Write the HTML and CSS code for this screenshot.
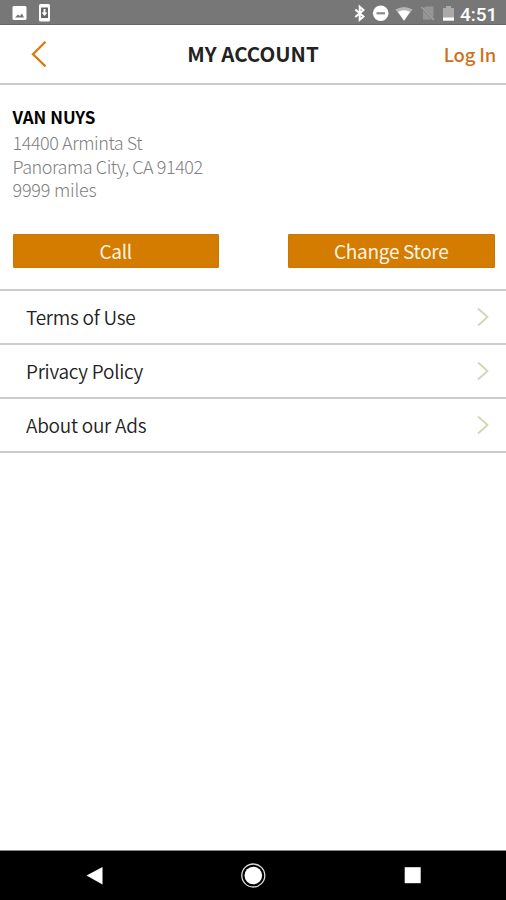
FILE: index.html
```html
<!DOCTYPE html>
<html lang="en">
<head>
  <meta charset="UTF-8" />
  <meta name="viewport" content="width=device-width, initial-scale=1.0" />
  <title>My Account</title>
  <link rel="stylesheet" href="styles.css">
</head>
<body>
  <div class="status-bar">
    <svg class="status-icons" width="60" height="25" viewBox="0 0 60 25">
      <rect x="12.5" y="6" width="14" height="14" rx="1.5" fill="#fff" />
      <path d="M15 17.5l3-3 2 1.500 2-2.500 2 4z" fill="#777" />
      <rect x="39" y="4" width="11" height="17.500" rx="1.500" fill="#fff" />
      <rect x="41" y="7.500" width="7" height="10.500" fill="#666" />
      <path d="M43.500 9h2v3.500h2l-3 3.500-3-3.500h2z" fill="#fff" />
    </svg>
    <svg class="status-icons" width="120" height="25" viewBox="340 0 120 25">
      <path d="M355.300 9.500l8.200 7-3.800 3.300V6.700l3.800 3.300-8.200 7" fill="none" stroke="#fff" stroke-width="2" />
      <circle cx="380.700" cy="13.300" r="7.800" fill="#fff" />
      <rect x="376.500" y="12.200" width="8.500" height="2.200" fill="#8a8a8a" />
      <path d="M395.500 9.500q8.500-5 17 0L404 20.700z" fill="#b5b5b5" />
      <path d="M398 11.700q6-3 12 0L404 20.700z" fill="#fff" />
      <path d="M433.500 6.500v11.500l-10-10 2.500-1.500z M423 10.500l9 9h-9z" fill="#959595" />
      <path d="M421.500 7l12.500 13" stroke="#a5a5a5" stroke-width="1.300" />
      <path d="M443 8h3V6h5v2h3v10h-11z" fill="#aaa" />
      <rect x="443" y="17.500" width="11" height="3.200" fill="#fff" />
    </svg>
    <span class="clock">4:51</span>
  </div>

  <header class="header">
    <svg class="back" width="18" height="28" viewBox="0 0 18 28">
      <path d="M15.500 1.700L3 14.300l12.500 12" fill="none" stroke="#dc7a12" stroke-width="2.300" />
    </svg>
    <h1 class="title">MY ACCOUNT</h1>
    <a class="login">Log In</a>
  </header>

  <section class="store">
    <div class="store-name">VAN NUYS</div>
    <div class="address">14400 Arminta St</div>
    <div class="address">Panorama City, CA 91402</div>
    <div class="address miles">9999 miles</div>
    <div class="buttons">
      <button class="btn">Call</button>
      <button class="btn">Change Store</button>
    </div>
  </section>

  <nav class="menu">
    <a class="row">
      <span>Terms of Use</span>
      <svg width="12" height="20" viewBox="0 0 12 20"><path d="M1 1.500L10.500 10 1 18.500" /></svg>
    </a>
    <a class="row">
      <span>Privacy Policy</span>
      <svg width="12" height="20" viewBox="0 0 12 20"><path d="M1 1.500L10.500 10 1 18.500" /></svg>
    </a>
    <a class="row">
      <span>About our Ads</span>
      <svg width="12" height="20" viewBox="0 0 12 20"><path d="M1 1.500L10.500 10 1 18.500" /></svg>
    </a>
  </nav>

  <div class="nav-bar">
    <svg width="506" height="49" viewBox="0 851 506 49">
      <path d="M86.500 875.500L102.500 867v17.500z" fill="#fff" />
      <circle cx="253.300" cy="875.500" r="8.800" fill="#fff" />
      <circle cx="253.300" cy="875.500" r="11.500" fill="none" stroke="#ddd" stroke-width="1.300" />
      <rect x="404.700" y="867.200" width="16" height="16" fill="#fff" />
    </svg>
  </div>
</body>
</html>
```

FILE: styles.css
```css
* {
  box-sizing: border-box;
}
body {
  margin: 0;
  height: 900px;
  display: flex;
  flex-direction: column;
  background-color: #fff;
  font-family: "Noto Sans CJK SC", "Noto Sans", sans-serif;
  color: #222;
}
.status-bar {
  display: flex;
  height: 25px;
  background-color: #777;
  border-bottom: 1px solid #666;
}
.status-icons {
  display: block;
  flex-shrink: 0;
}
.status-icons + .status-icons {
  margin-left: 280px;
}
.clock {
  font-family: Roboto, sans-serif;
  font-size: 19px;
  font-weight: 500;
  line-height: 29px;
  color: #fff;
}
.header {
  display: grid;
  grid-template-columns: 150px 1fr 150px;
  align-items: center;
  height: 60px;
  border-bottom: 2px solid #ccc;
}
.back {
  margin-left: 30px;
}
.title {
  margin: 0;
  padding-bottom: 2px;
  font-size: 20.500px;
  font-weight: bold;
  line-height: 30px;
  text-align: center;
}
.login {
  justify-self: end;
  margin-right: 10px;
  padding-bottom: 1px;
  font-size: 18.500px;
  font-weight: 500;
  letter-spacing: -0.2px;
  line-height: 28px;
  color: #d07018;
}
.store {
  height: 206px;
  padding: 19px 11.500px 0 12.500px;
  border-bottom: 2px solid #ccc;
}
.store-name {
  margin-bottom: 1px;
  font-size: 17px;
  font-weight: bold;
  line-height: 26px;
  color: #000;
}
.address {
  font-size: 18px;
  font-weight: 300;
  letter-spacing: -0.440px;
  line-height: 23.700px;
  color: #808080;
}
.miles {
  letter-spacing: -0.200px;
}
.buttons {
  display: flex;
  justify-content: space-between;
  margin-top: 32px;
}
.btn {
  width: 206.500px;
  height: 34px;
  padding: 0;
  border: 1px solid #c97806;
  border-radius: 1px;
  background-color: #d37c00;
  font-family: inherit;
  font-size: 19px;
  letter-spacing: -0.300px;
  line-height: 30px;
  color: #fff4e4;
}
.row {
  display: flex;
  align-items: center;
  justify-content: space-between;
  height: 54px;
  padding: 0 17px 0 26px;
  border-bottom: 2px solid #ccc;
  font-size: 19px;
  font-weight: 350;
  letter-spacing: -0.250px;
}
.row span {
  padding-bottom: 2px;
}
.row path {
  fill: none;
  stroke: #d3d5b2;
  stroke-width: 1.800;
}
.nav-bar {
  height: 50px;
  margin-top: auto;
  border-top: 1px solid #888;
  background-color: #000;
}
.nav-bar svg {
  display: block;
}
```
